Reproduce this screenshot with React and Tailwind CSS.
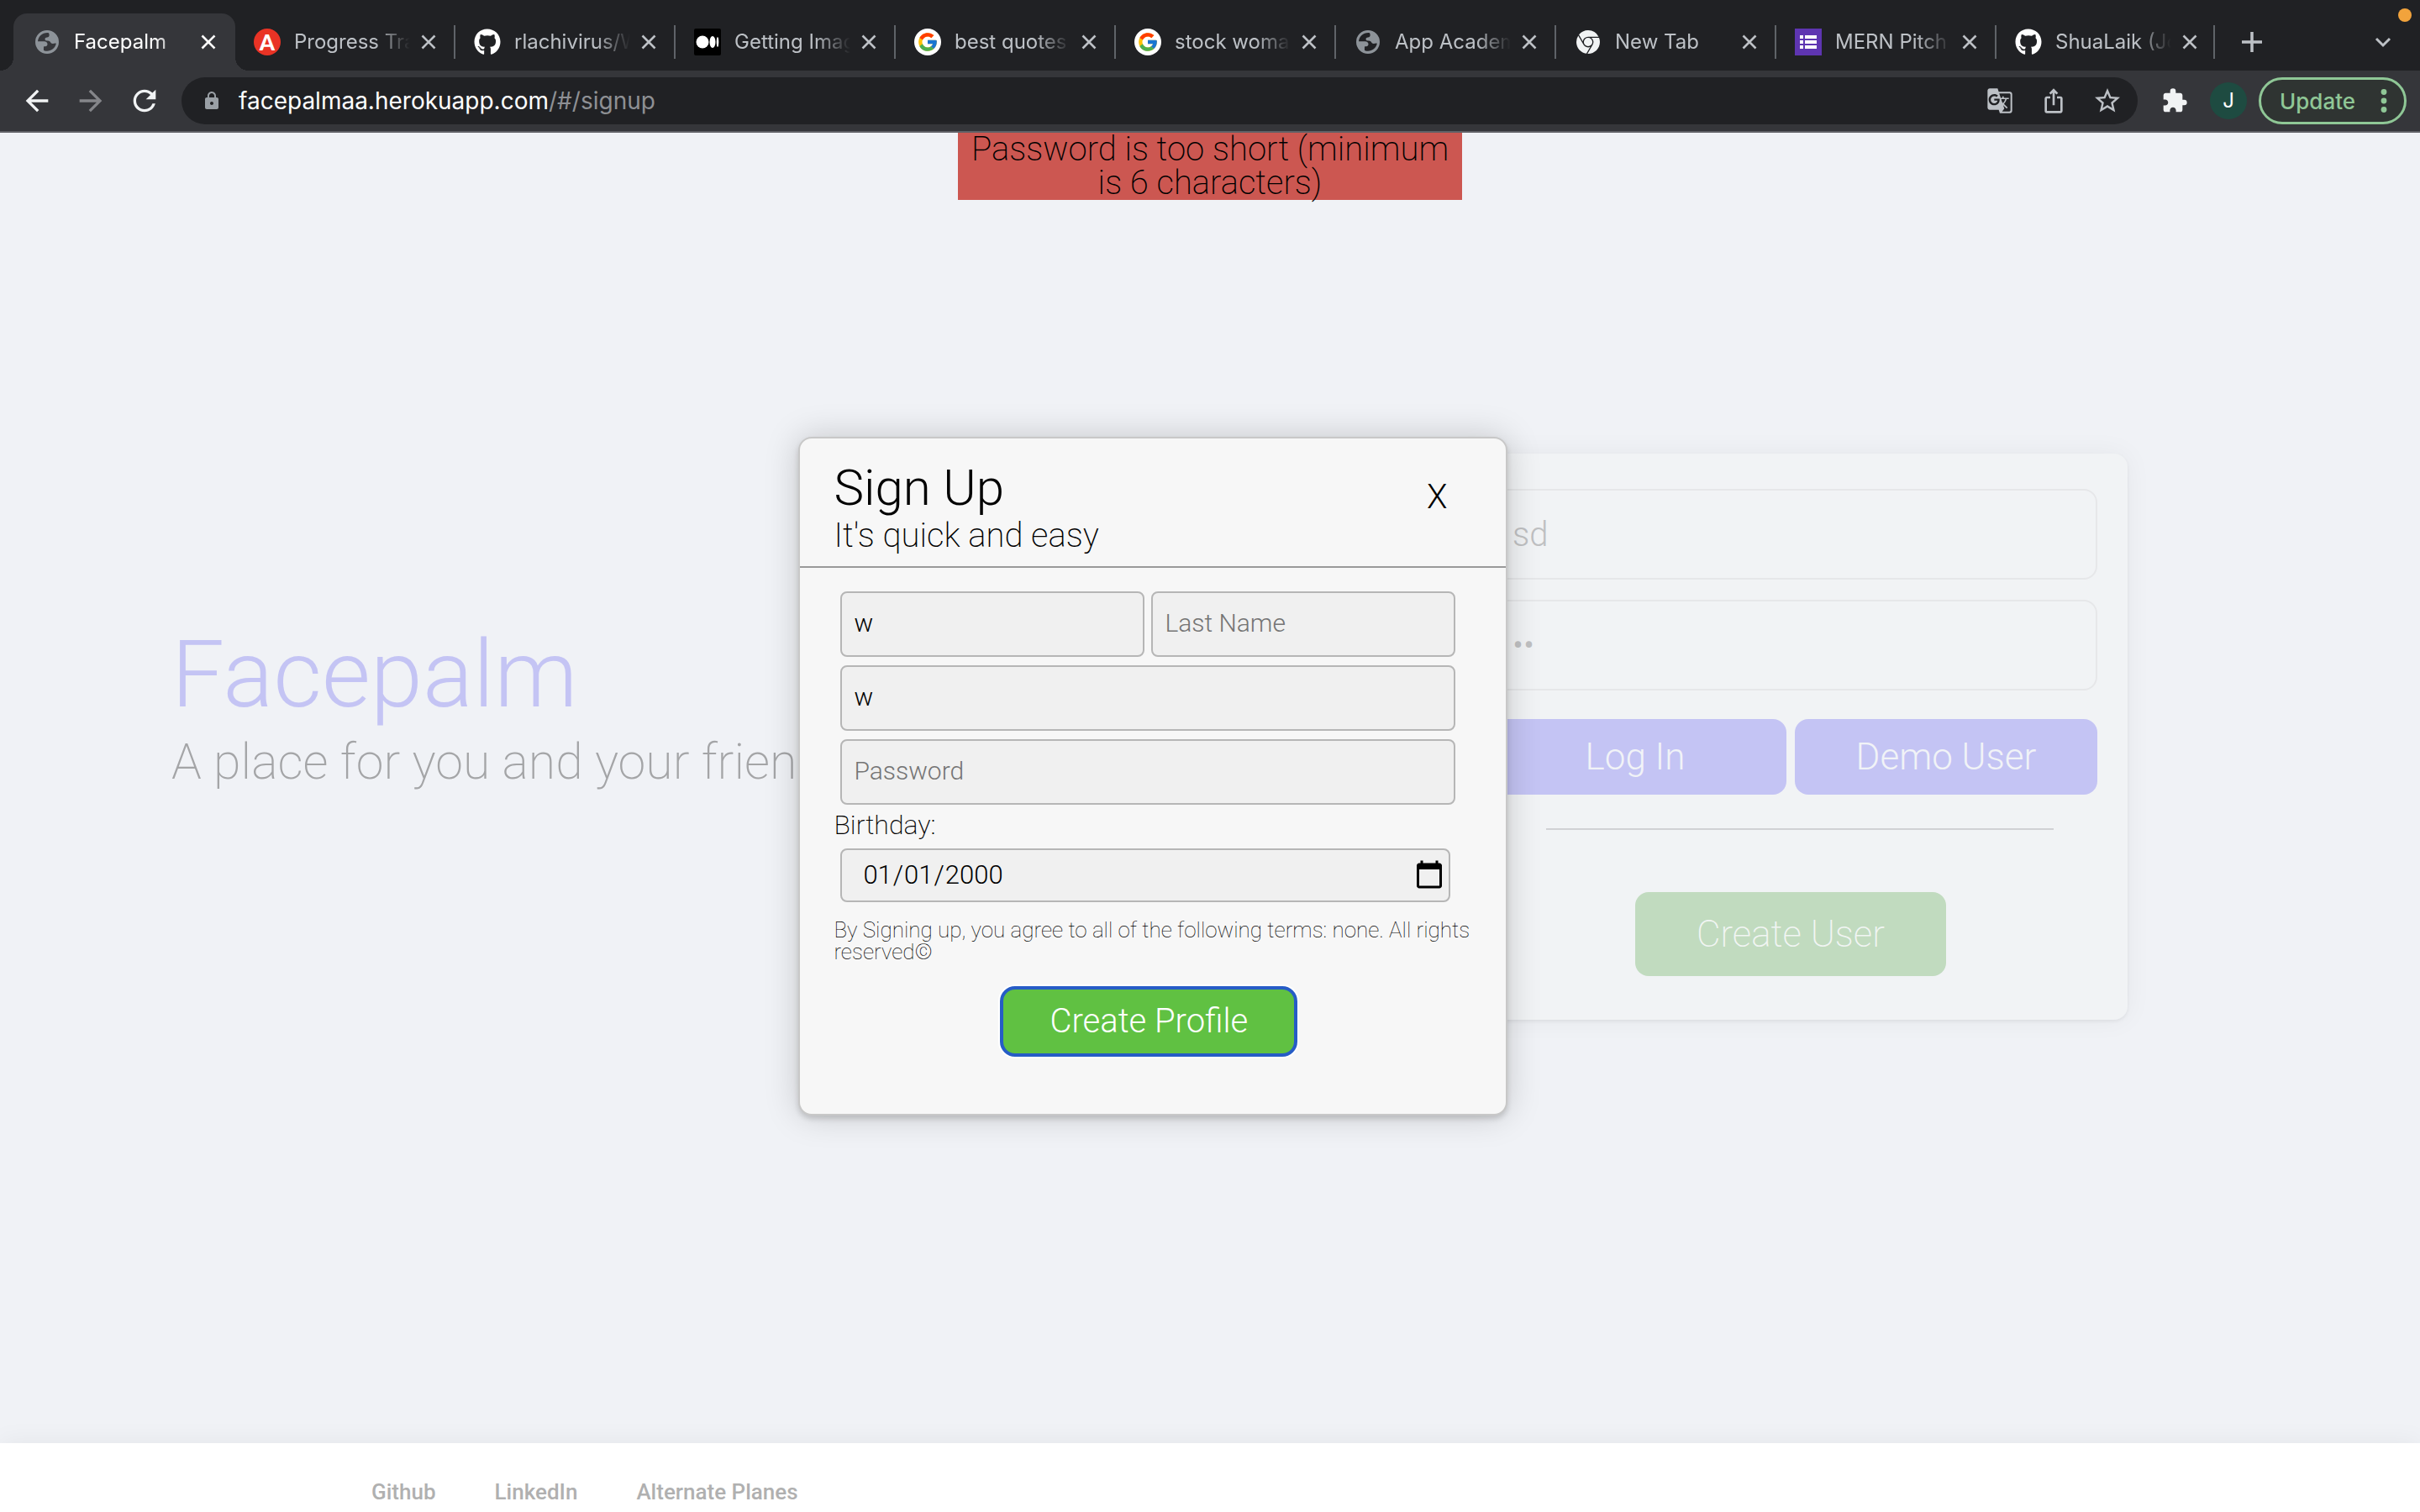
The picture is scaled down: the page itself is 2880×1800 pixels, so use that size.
import { FaGithub } from "react-icons/fa";
import { FcGoogle } from "react-icons/fc";
import { SiGooglechrome } from "react-icons/si";
import { MdArrowBack, MdArrowForward, MdExtension, MdGTranslate, MdIosShare, MdLock, MdRefresh, MdStarBorder } from "react-icons/md";

function Globe() {
  return (
    <svg viewBox="0 0 28 28" className="size-7" aria-hidden="true">
      <path
        fillRule="evenodd"
        fill="#8d9399"
        d="M14 0a14 14 0 1 0 0 28a14 14 0 0 0 0-28ZM15.500 3C8.500 2.500 3.500 7 3 13.300h7.500c2.500 0 4 1.500 4 3.200 0 2-1.300 2.800-4.200 2.800-.3 0-.4 1-.3 4.600 6 2.600 13.500-1 14.800-8.100-1.600-.8-2.500.2-4 .2-1.900 0-2.300-1.300-3.300-2.500-.8-1-2-1-3.600-1-1.700 0-2.400-.8-2.400-2 0-1.300 1-2 2.500-2.100 1.700 0 2.600-.8 2.600-2.400 0-1.200.1-2-1.100-3Z"
      />
    </svg>
  );
}

function AppAcademy() {
  return (
    <span className="grid size-8 place-items-center rounded-full bg-[#e93325] font-[Lato] text-[26px] leading-8 font-black text-white">
      A
    </span>
  );
}

function Medium() {
  return (
    <svg viewBox="0 0 32 32" className="size-8" aria-hidden="true">
      <rect width="32" height="32" rx="2" fill="#000" />
      <circle cx="10" cy="16" r="7.500" fill="#fff" />
      <ellipse cx="22" cy="16" rx="3.500" ry="7" fill="#fff" />
      <ellipse cx="28" cy="16" rx="1.300" ry="6" fill="#fff" />
    </svg>
  );
}

function Google() {
  return (
    <span className="grid size-8 place-items-center rounded-full bg-white">
      <FcGoogle className="size-[26px]" />
    </span>
  );
}

function Forms() {
  return (
    <svg viewBox="0 0 32 32" className="size-8" aria-hidden="true">
      <rect width="32" height="32" fill="#5e35b1" />
      <path d="M6 8h4v4H6zM12 8h14v4H12zM6 14h4v4H6zM12 14h14v4H12zM6 20h4v4H6zM12 20h14v4H12z" fill="#fff" />
    </svg>
  );
}

function Cross() {
  return (
    <svg viewBox="0 0 24 24" className="size-6" aria-hidden="true">
      <path d="M4.500 4.500l15 15M19.500 4.500l-15 15" stroke="currentColor" strokeWidth="2.600" fill="none" />
    </svg>
  );
}

const tabs = [
  { title: "Facepalm", icon: <Globe />, active: true },
  { title: "Progress Tracker", icon: <AppAcademy /> },
  { title: "rlachivirus/Wellness", icon: <FaGithub className="size-8 text-white" /> },
  { title: "Getting Images", icon: <Medium /> },
  { title: "best quotes ever", icon: <Google /> },
  { title: "stock woman", icon: <Google /> },
  { title: "App Academy", icon: <Globe /> },
  { title: "New Tab", icon: <SiGooglechrome className="size-7 text-[#f1f3f4]" /> },
  { title: "MERN Pitch Deck", icon: <Forms /> },
  { title: "ShuaLaik (Joshua)", icon: <FaGithub className="size-8 text-white" /> },
];

function Tab({ tab, divider }) {
  return (
    <div
      className={
        tab.active
          ? "relative flex h-[68px] w-[264px] shrink items-center rounded-t-2xl bg-[#35363a] pl-6 text-white before:absolute before:right-full before:bottom-0 before:size-4 before:bg-[radial-gradient(circle_at_0_0,transparent_16px,#35363a_16px)] after:absolute after:bottom-0 after:left-full after:size-4 after:bg-[radial-gradient(circle_at_100%_0,transparent_16px,#35363a_16px)]"
          : "relative flex h-[68px] w-[262px] shrink items-center pl-[22px] text-[#bdc1c6] last-of-type:w-[260px]"
      }
    >
      <span className="grid size-8 shrink-0 place-items-center">{tab.icon}</span>
      <a
        href="#/signup"
        className="ml-4 w-[138px] overflow-hidden text-2xl whitespace-nowrap [mask-image:linear-gradient(to_right,#000_70%,transparent_100%)]"
      >
        {tab.title}
      </a>
      <button type="button" aria-label={"Close " + tab.title} className="ml-2.5">
        <Cross />
      </button>
      {divider && <span className="absolute right-0 h-10 w-0.5 bg-[#5f6368]" />}
    </div>
  );
}

function Browser() {
  return (
    <header className="border-b-2 border-[#606166] bg-[#35363a] font-[Inter,sans-serif]">
      <div className="relative flex h-[84px] items-end bg-[#202124] pl-4">
        {tabs.map((tab, i) => (
          <Tab key={i} tab={tab} divider={i > 0} />
        ))}
        <button type="button" aria-label="New tab" className="mb-5 ml-[30px] text-[#bdc1c6]">
          <svg viewBox="0 0 28 28" className="size-7" aria-hidden="true">
            <path d="M14 2v24M2 14h24" stroke="currentColor" strokeWidth="3.500" />
          </svg>
        </button>
        <button type="button" aria-label="Search tabs" className="mr-8 mb-5 ml-auto text-[#bdc1c6]">
          <svg viewBox="0 0 24 28" className="h-7 w-6" aria-hidden="true">
            <path d="M4 10l8 8 8-8" stroke="currentColor" strokeWidth="3" fill="none" />
          </svg>
        </button>
        <span className="absolute top-2.5 right-2.5 size-4 rounded-full bg-[#f2a33c]" />
      </div>
      <div className="flex h-[72px] items-center pr-4 pl-6">
        <button type="button" aria-label="Back" className="text-[#f1f3f4]">
          <MdArrowBack className="size-10" />
        </button>
        <button type="button" aria-label="Forward" className="ml-6 text-[#85868a]">
          <MdArrowForward className="size-10" />
        </button>
        <button type="button" aria-label="Reload" className="ml-6 text-[#f1f3f4]">
          <MdRefresh className="size-10" />
        </button>
        <div className="ml-6 flex h-14 flex-1 items-center rounded-full bg-[#202124] pr-[18px] pl-6 text-[#bdc1c6]">
          <MdLock className="size-6 text-[#9aa0a6]" />
          <div className="ml-5 flex-1 text-[28px] text-[#8e9094]">
            <span className="text-white">facepalmaa.herokuapp.com</span>/#/signup
          </div>
          <button type="button" aria-label="Translate this page">
            <MdGTranslate className="size-8" />
          </button>
          <button type="button" aria-label="Share this page" className="ml-8">
            <MdIosShare className="size-8" />
          </button>
          <button type="button" aria-label="Bookmark this page" className="ml-[30px]">
            <MdStarBorder className="size-9" />
          </button>
        </div>
        <button type="button" aria-label="Extensions" className="ml-7 text-[#f1f3f4]">
          <MdExtension className="size-8" />
        </button>
        <button type="button" aria-label="Profile J" className="ml-[26px] grid size-11 place-items-center rounded-full bg-[#1e4b41] text-2xl text-white">
          J
        </button>
        <button
          type="button"
          className="ml-3.5 flex h-14 w-44 items-center justify-between rounded-full border-[3px] border-[#8fc796] bg-[#2f3432] pr-5 pl-[22px] text-[26px] font-medium text-[#8fc796]"
        >
          Update
          <svg viewBox="0 0 8 32" className="h-8 w-2" aria-hidden="true">
            <circle cx="4" cy="5.500" r="3.400" fill="currentColor" />
            <circle cx="4" cy="16" r="3.400" fill="currentColor" />
            <circle cx="4" cy="26.500" r="3.400" fill="currentColor" />
          </svg>
        </button>
      </div>
    </header>
  );
}

function Splash() {
  return (
    <section className="flex flex-1 items-start justify-between pr-[348px] pl-[204px]">
      <div className="mt-[581px]">
        <h1 className="text-[112px] leading-[128px] font-light text-[#c4c4f4]">Facepalm</h1>
        <p className="mt-1 text-[59px] leading-[72px] font-extralight text-[#a4a5a7]">A place for you and your friends</p>
      </div>
      <form
        className="mt-[382px] w-[802px] rounded-2xl bg-[#f1f3f5] px-9 pt-[42px] pb-[52px] shadow-[0_2px_4px_rgba(0,0,0,0.06),0_0_32px_rgba(0,0,0,0.05)]"
        onSubmit={(e) => e.preventDefault()}
      >
        <input
          aria-label="Username"
          defaultValue="sd"
          className="block h-[108px] w-full rounded-2xl border-2 border-[#e6e7e9] px-8 text-[40px] font-light text-[#bfc0c2] outline-none"
        />
        <input
          aria-label="Login password"
          type="password"
          defaultValue="ab"
          className="mt-6 block h-[108px] w-full rounded-2xl border-2 border-[#e6e7e9] px-8 text-[40px] font-light text-[#bfc0c2] outline-none"
        />
        <div className="mt-[34px] flex gap-2.5 text-[44px] leading-[90px] font-light text-[#f1f3f7]">
          <button type="submit" className="h-[90px] flex-1 rounded-2xl bg-[#c4c4f4]">Log In</button>
          <button type="button" className="h-[90px] flex-1 rounded-2xl bg-[#c4c4f4]">Demo User</button>
        </div>
        <hr className="mt-10 mr-[52px] ml-[74px] border-t-2 border-[#d0d1d4]" />
        <button
          type="button"
          className="mx-auto mt-[74px] block h-[100px] w-[370px] rounded-2xl bg-[#c1dbbf] text-[44px] font-extralight text-[#f1f5f3]"
        >
          Create User
        </button>
      </form>
    </section>
  );
}

function Field(props) {
  return (
    <input
      {...props}
      className="block h-[78px] w-full min-w-0 rounded-lg border-2 border-[#b6b6b6] bg-[#f0f0f0] px-3.5 pb-1 text-[30px] font-light text-black outline-none placeholder:text-[#757575]"
    />
  );
}

function SignUp() {
  return (
    <div
      role="dialog"
      aria-labelledby="signup-title"
      className="absolute top-[362px] left-[33%] w-[844px] rounded-2xl border-2 border-[#c8c8c8] bg-[#f7f7f7] pb-[68px] shadow-[0_4px_6px_rgba(0,0,0,0.15),0_0_40px_rgba(0,0,0,0.18)]"
    >
      <div className="flex items-start justify-between border-b-2 border-[#999999] pr-[70px] pb-3.5 pl-10">
        <div className="pt-6">
          <h2 id="signup-title" className="text-[60px] leading-[70px] font-light">Sign Up</h2>
          <p className="text-[40px] leading-[44px] font-extralight">It's quick and easy</p>
        </div>
        <button type="button" aria-label="Close" className="mt-[46px] text-[40px] leading-[48px] font-light">X</button>
      </div>
      <form className="px-10 pt-7" onSubmit={(e) => e.preventDefault()}>
        <div className="mr-5 ml-2 grid grid-cols-2 gap-x-2 gap-y-2.5">
          <Field aria-label="First Name" placeholder="First Name" defaultValue="w" />
          <Field aria-label="Last Name" placeholder="Last Name" />
          <div className="col-span-2">
            <Field aria-label="Email" placeholder="Email" defaultValue="w" />
          </div>
          <div className="col-span-2">
            <Field aria-label="Password" type="password" placeholder="Password" />
          </div>
        </div>
        <label htmlFor="birthday" className="mt-1 block text-[32px] leading-10 font-extralight">Birthday:</label>
        <input
          id="birthday"
          type="date"
          defaultValue="2000-01-01"
          className="mt-2 ml-2 block h-16 w-[726px] rounded-lg border-2 border-[#b6b6b6] bg-[#f0f0f0] pr-1 pl-6 text-[31px] font-light outline-none [&::-webkit-calendar-picker-indicator]:size-[38px] [&::-webkit-calendar-picker-indicator]:p-0"
        />
        <p className="-mr-4 mt-5 text-[26px] leading-[26px] font-thin">
          By Signing up, you agree to all of the following terms: none. All rights reserved©
        </p>
        <button
          type="submit"
          className="mt-7 ml-[198px] block h-[84px] w-[354px] rounded-[18px] border-4 border-[#265cc6] bg-[#60c142] text-[40px] leading-[76px] font-light text-white ring-2 ring-white"
        >
          Create Profile
        </button>
      </form>
    </div>
  );
}

export default function App() {
  return (
    <div className="flex min-h-screen flex-col overflow-hidden bg-[#f0f2f6] font-[Roboto,sans-serif] text-black">
      <Browser />
      <main className="relative flex flex-1 flex-col">
        <p
          role="alert"
          className="absolute top-0 left-1/2 w-[600px] -translate-x-1/2 bg-[#cc5751] text-center text-[40px] leading-10 font-extralight"
        >
          Password is too short (minimum is 6 characters)
        </p>
        <Splash />
        <SignUp />
      </main>
      <footer className="flex h-[82px] gap-[70px] bg-white pt-[42px] pl-[442px] text-[26px] leading-8 font-medium text-[#b0b0b0] shadow-[0_0_32px_rgba(0,0,0,0.06)]">
        <a href="#github">Github</a>
        <a href="#linkedin">LinkedIn</a>
        <a href="#planes">Alternate Planes</a>
      </footer>
    </div>
  );
}
